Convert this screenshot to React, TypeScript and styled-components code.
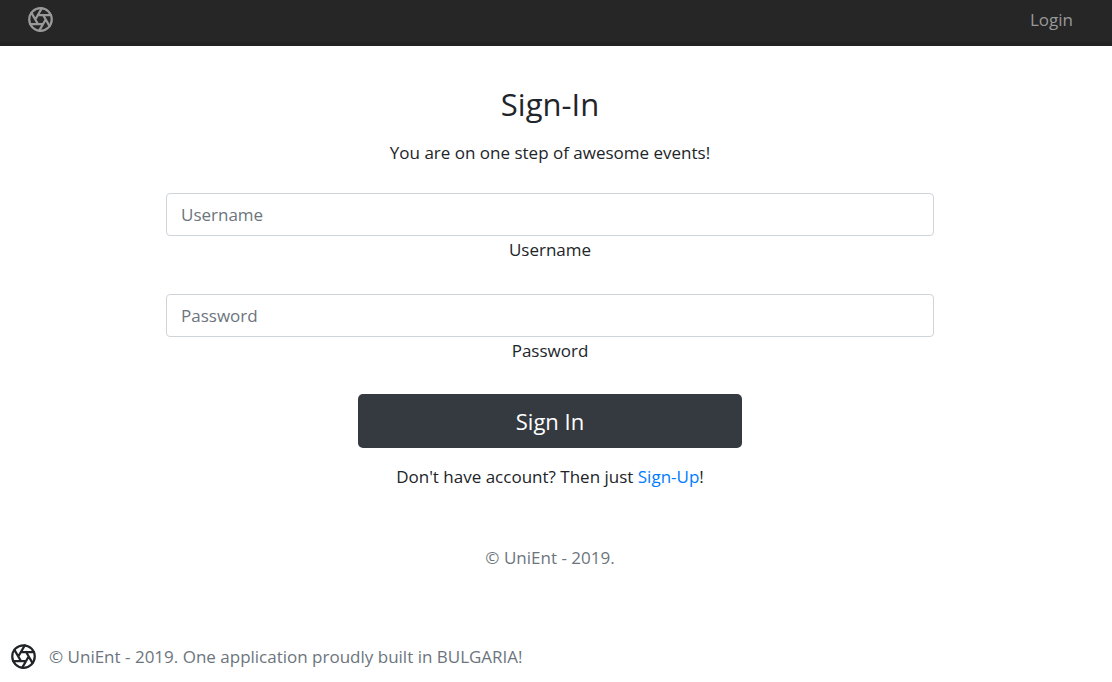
import React from "react";
import styled, { createGlobalStyle } from "styled-components";

const GlobalStyle = createGlobalStyle`
  *, *::before, *::after { box-sizing: border-box; }
  body {
    margin: 0;
    background: #fff;
    color: #212529;
    font-family: "Segoe UI", "Open Sans", "Noto Sans", sans-serif;
    font-size: 17px;
    font-weight: 400;
    line-height: 27px;
  }
`;

const Header = styled.header`
  display: flex;
  align-items: center;
  justify-content: space-between;
  height: 46px;
  padding: 0 39px 3px 27px;
  background: #262626;
  border-bottom: 4px solid #232223;
`;

const BrandLink = styled.a`
  display: flex;
  color: #999;
`;

const NavLink = styled.a`
  color: #999;
  text-decoration: none;
`;

const Main = styled.main`
  padding: 39px 12px 0 0;
  text-align: center;
`;

const Form = styled.form`
  display: flex;
  flex-direction: column;
  align-items: center;
  width: 100%;
  max-width: 768px;
  margin: 0 auto;
`;

const Title = styled.h1`
  margin: 0 0 16px;
  font-size: 31px;
  font-weight: 400;
  line-height: 38px;
`;

const Lead = styled.p`
  margin: 0 0 27px;
`;

const Fields = styled.div`
  display: flex;
  flex-direction: column;
  gap: 31px;
  width: 100%;
  margin-bottom: 30px;
`;

const Field = styled.div`
  display: flex;
  flex-direction: column;
`;

const Input = styled.input`
  width: 100%;
  height: 43px;
  padding: 0 14px;
  border: 1px solid #ced4da;
  border-radius: 4px;
  background: #fff;
  color: #495057;
  font: inherit;

  &::placeholder {
    color: #6c757d;
    opacity: 1;
  }
`;

const SubmitButton = styled.button`
  width: 50%;
  height: 54px;
  margin-bottom: 15px;
  border: 0;
  border-radius: 5px;
  background: #343a40;
  color: #fff;
  font-family: inherit;
  font-size: 22px;
`;

const Prompt = styled.p`
  margin: 0 0 54px;
`;

const SignUpLink = styled.a`
  color: #007bff;
  text-decoration: none;
`;

const Copyright = styled.p`
  margin: 0;
  color: #6c757d;
`;

const Footer = styled.footer`
  display: flex;
  align-items: center;
  gap: 12px;
  padding: 72px 10px 12px;
`;

function Aperture() {
  return (
    <svg
      width="27"
      height="27"
      viewBox="0 0 24 24"
      fill="none"
      stroke="currentColor"
      strokeWidth="2"
      strokeLinecap="round"
      strokeLinejoin="round"
      aria-hidden="true"
    >
      <circle cx="12" cy="12" r="10" />
      <path d="M14.31 8l5.74 9.94M9.69 8h11.48M7.38 12l5.74-9.94M9.69 16L3.95 6.06M14.31 16H2.83M16.62 12l-5.74 9.94" />
    </svg>
  );
}

export default function App() {
  return (
    <>
      <GlobalStyle />
      <Header>
        <BrandLink href="#home" aria-label="UniEnt">
          <Aperture />
        </BrandLink>
        <nav>
          <NavLink href="#login">Login</NavLink>
        </nav>
      </Header>
      <Main>
        <Form>
          <Title>Sign-In</Title>
          <Lead>You are on one step of awesome events!</Lead>
          <Fields>
            <Field>
              <Input id="username" type="text" placeholder="Username" />
              <label htmlFor="username">Username</label>
            </Field>
            <Field>
              <Input id="password" type="password" placeholder="Password" />
              <label htmlFor="password">Password</label>
            </Field>
          </Fields>
          <SubmitButton type="submit">Sign In</SubmitButton>
          <Prompt>
            Don't have account? Then just <SignUpLink href="#sign-up">Sign-Up</SignUpLink>!
          </Prompt>
          <Copyright>© UniEnt - 2019.</Copyright>
        </Form>
      </Main>
      <Footer>
        <Aperture />
        <Copyright>© UniEnt - 2019. One application proudly built in BULGARIA!</Copyright>
      </Footer>
    </>
  );
}
